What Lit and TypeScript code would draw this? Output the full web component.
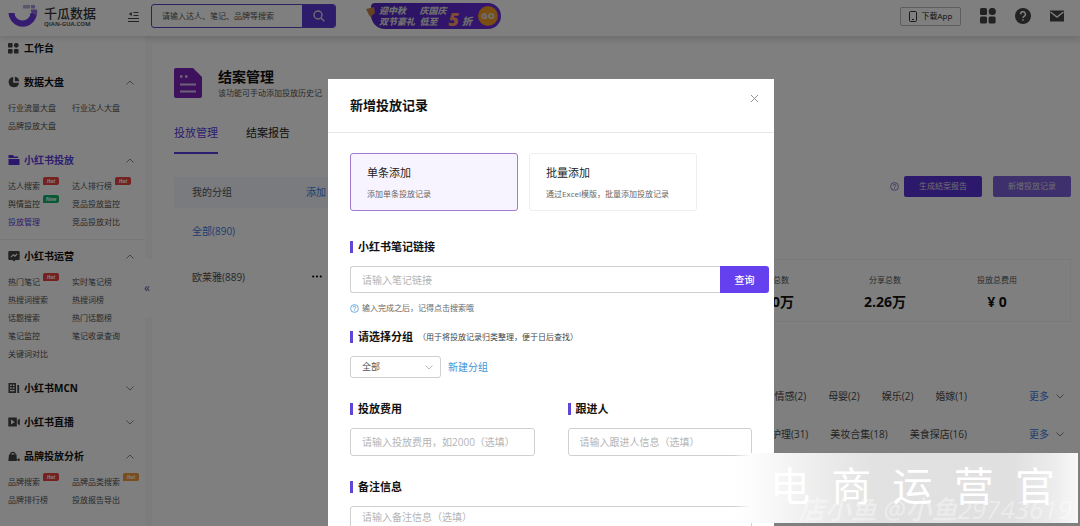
import { LitElement, html, css, svg, nothing } from "lit";
import { customElement, state } from "lit/decorators.js";
import { classMap } from "lit/directives/class-map.js";

interface NavItem {
  label: string;
  badge?: "hot" | "new" | "warm";
  active?: boolean;
}
interface NavSection {
  label: string;
  icon: string;
  open: boolean;
  active?: boolean;
  line?: boolean;
  items: NavItem[];
}

const icons: Record<string, unknown> = {
  grid: svg`<rect x="0" y="0" width="5" height="5" rx="1"/><circle cx="9" cy="2.5" r="2.6"/><rect x="0" y="6.5" width="5" height="5" rx="1"/><rect x="6.5" y="6.5" width="5" height="5" rx="1"/>`,
  pie: svg`<path d="M5.2 1A5.2 5.2 0 1 0 11 6.8H5.2Z"/><path d="M6.8 0.8A5 5 0 0 1 11.2 5.2H6.8Z"/>`,
  folder: svg`<path d="M0.5 1H5l1 1.500h4V4H0.500Z"/><path d="M0.500 5H11.500V11H0.500Z"/>`,
  board: svg`<path fill-rule="evenodd" d="M1.500 1h9a1.200 1.200 0 0 1 1.200 1.200v6.600a1.200 1.200 0 0 1-1.200 1.200H7.500L6 11.500 4.500 10h-3A1.200 1.200 0 0 1 0.300 8.800V2.200A1.200 1.200 0 0 1 1.500 1ZM2.500 6.800l.8.8L5.400 5.500l1.500 1.400L9.600 4.200l-.8-.8L6.900 5.300 5.400 3.900Z"/>`,
  building: svg`<path fill-rule="evenodd" d="M0.500 1H8V11H0.500ZM2 2.500V4H3.700V2.500ZM4.800 2.500V4H6.500V2.500ZM2 5.200V6.700H3.700V5.200ZM4.800 5.200V6.700H6.500V5.200ZM2 8V9.300H6.500V8Z"/><rect x="9.300" y="3" width="1.800" height="8"/>`,
  video: svg`<path fill-rule="evenodd" d="M0.300 1.500H8.800V10.500H0.300ZM3 3.600V8.400L6.800 6Z"/><path d="M9.600 4.300 11.800 2.500V9.500L9.600 7.700Z"/>`,
  bag: svg`<path fill-rule="evenodd" d="M1 4.500h1a2.800 2.800 0 0 1 5.600 0H8.600V7.500L9 11H0.300ZM3.200 4.500h3.200a1.600 1.600 0 0 0-3.200 0Z"/><circle cx="10.600" cy="9.700" r="1.300"/>`,
};

const sections: NavSection[] = [
  { label: "数据大盘", icon: "pie", open: true, items: [{ label: "行业流量大盘" }, { label: "行业达人大盘" }, { label: "品牌投放大盘" }] },
  {
    label: "小红书投放", icon: "folder", open: true, active: true, line: true,
    items: [
      { label: "达人搜索", badge: "hot" }, { label: "达人排行榜", badge: "hot" },
      { label: "舆情监控", badge: "new" }, { label: "竞品投放监控" },
      { label: "投放管理", active: true }, { label: "竞品投放对比" },
    ],
  },
  {
    label: "小红书运营", icon: "board", open: true,
    items: [
      { label: "热门笔记", badge: "hot" }, { label: "实时笔记榜" },
      { label: "热搜词搜索" }, { label: "热搜词榜" },
      { label: "话题搜索" }, { label: "热门话题榜" },
      { label: "笔记监控" }, { label: "笔记收录查询" },
      { label: "关键词对比" },
    ],
  },
  { label: "小红书MCN", icon: "building", open: false, items: [] },
  { label: "小红书直播", icon: "video", open: false, items: [] },
  {
    label: "品牌投放分析", icon: "bag", open: true,
    items: [{ label: "品牌搜索", badge: "hot" }, { label: "品牌品类搜索", badge: "warm" }, { label: "品牌排行榜" }, { label: "投放报告导出" }],
  },
];

const stats = [
  { label: "点赞总数", value: "1.50万" },
  { label: "分享总数", value: "2.26万" },
  { label: "投放总费用", value: "¥ 0" },
];

const tagRows = [
  ["情感(2)", "母婴(2)", "娱乐(2)", "婚嫁(1)"],
  ["护理(31)", "美妆合集(18)", "美食探店(16)"],
];

@customElement("app-root")
export class AppRoot extends LitElement {
  @state() private mode = 0;

  static styles = css`
    :host {
      display: block;
      position: relative;
      height: 100vh;
      overflow: hidden;
      font-family: "Open Sans", "Noto Sans CJK SC", sans-serif;
      font-size: 8px;
      line-height: 12px;
      color: #222;
      background: #fff;
    }
    * { box-sizing: border-box; }
    button, input, select, textarea { font: inherit; color: inherit; margin: 0; padding: 0; border: 0; background: none; outline: none; border-radius: 0; }
    button { cursor: pointer; }
    a { color: inherit; text-decoration: none; }
    h1, h2, h3, p, ul, dl, dd, dt { margin: 0; padding: 0; font-size: inherit; list-style: none; }
    svg { display: block; flex: none; }
    .chev { fill: none; stroke: #888; stroke-width: 1; }

    .page { display: flex; flex-direction: column; height: 100%; }
    .topbar { display: flex; align-items: center; height: 36px; flex: none; padding: 0 16px 4px 8px; background: #fff; box-shadow: 0 2px 6px rgba(0, 0, 0, 0.14); z-index: 1; }
    .brand { display: flex; align-items: center; gap: 6px; width: 120px; }
    .brand-text { display: flex; flex-direction: column; }
    .brand-name { font-size: 13px; line-height: 16px; color: #333; font-weight: 500; }
    .brand-site { font-size: 6px; line-height: 7px; font-weight: 700; color: #555; }
    .search { display: flex; width: 185px; height: 24px; margin-left: 12px; border: 1px solid #5f45c8; border-radius: 3px; overflow: hidden; }
    .search input { flex: 1; min-width: 0; padding: 0 10px; }
    .search input::placeholder { color: #555; opacity: 1; }
    .search button { width: 33px; background: #5a38d8; display: grid; place-items: center; }
    .promo { position: relative; display: flex; align-items: center; width: 135px; height: 26px; margin-left: 30px; }
    .promo-body { display: flex; align-items: center; width: 130px; height: 26px; margin-left: 5px; padding: 0 3px 0 8px; border-radius: 4px 13px 13px 14px; background: linear-gradient(90deg, #5526c4, #6a2ce0); color: #ddd; font-style: italic; font-weight: 900; }
    .promo-lines { display: grid; grid-template-columns: auto auto; font-size: 9px; line-height: 11px; flex: 1; }
    .promo-lines span { white-space: nowrap; }
    .promo-five { color: #ff9a68; font-size: 18px; line-height: 20px; align-self: end; }
    .promo-zhe { font-size: 10px; align-self: end; margin: 0 6px 2px 3px; }
    .promo-go { display: grid; place-items: center; width: 20px; height: 20px; border-radius: 50%; background: #f59a23; font-size: 9px; font-style: normal; }
    .promo-tip { position: absolute; left: 0; top: 4px; }
    .tools { display: flex; align-items: center; gap: 19px; margin-left: auto; }
    .app-btn { display: flex; align-items: center; justify-content: center; gap: 5px; width: 61px; height: 19px; border: 1px solid #bbb; border-radius: 2px; }
    .dark { fill: #444; }

    .frame { display: flex; flex: 1; min-height: 0; background: #f8f8f8; }
    .side { display: flex; flex-direction: column; width: 145px; flex: none; background: #fff; position: relative; }
    .home { display: flex; align-items: center; gap: 5px; height: 24px; margin-bottom: 5px; padding-left: 8px; font-size: 10px; font-weight: 700; color: #111; }
    .sec { padding-bottom: 8px; }
    .sec.closed { padding-bottom: 0; }
    .sec.line { border-bottom: 1px solid #eee; margin-bottom: -1px; }
    .sec-head { display: flex; align-items: center; gap: 4px; width: 100%; height: 34px; padding: 0 11px 0 8px; font-size: 10px; font-weight: 700; color: #111; text-align: left; }
    .sec-head span { flex: 1; }
    .sec-head .glyph { fill: #444; }
    .sec-head.on { color: #5a3de0; }
    .sec-head.on .glyph { fill: #5a2fd8; }
    .links { display: grid; grid-template-columns: 64px 1fr; padding-left: 8px; }
    .links li { display: flex; gap: 3px; height: 18px; line-height: 18px; white-space: nowrap; color: #505050; }
    .links .on { color: #5a3de0; }
    .badge { height: 8px; width: 16px; border-radius: 2px 2px 2px 0; font-size: 5px; line-height: 8px; font-style: italic; font-weight: 700; color: #fff; text-align: center; background: #e8433f; }
    .badge.new { background: #15b06b; }
    .badge.warm { background: #f59a3d; }
    .fold { position: absolute; left: 141px; top: 222px; width: 12px; height: 60px; background: #fff; border-radius: 0 6px 6px 0; color: #5a5a9a; font-size: 12px; }

    .main { flex: 1; min-width: 0; margin: 8px 0 0 7px; padding: 20px 9px 0 22px; background: #fff; }
    .head { display: flex; gap: 16px; align-items: center; height: 38px; }
    .head h1 { font-size: 14px; line-height: 20px; color: #111; }
    .head p { font-size: 8px; line-height: 12px; color: #555; white-space: nowrap; }
    .tabs { display: flex; gap: 28px; margin-top: 11px; font-size: 11px; }
    .tabs a { height: 41px; padding-top: 12px; line-height: 16px; border-bottom: 2px solid transparent; }
    .tabs .on { color: #5a3de0; border-color: #5a3de0; }
    .cols { display: flex; gap: 12px; margin-top: 23px; font-size: 10px; }
    .groups { width: 168px; flex: none; }
    .groups-head { display: flex; justify-content: space-between; height: 31px; line-height: 31px; padding: 0 16px 0 18px; background: #f3f6fc; color: #555; }
    .blue { color: #3d7be0; }
    .groups li { display: flex; justify-content: space-between; align-items: center; height: 47px; padding: 0 20px 0 18px; color: #505050; }
    .groups .all { height: 45px; color: #3d7be0; }
    .detail { flex: 1; min-width: 0; }
    .acts { display: flex; justify-content: flex-end; align-items: center; gap: 11px; height: 18px; }
    .acts button { width: 78px; height: 21px; border-radius: 2px; background: #5a32d6; color: #ddd; font-size: 8px; }
    .acts button.light { background: #7b60d8; }
    .acts svg { margin-right: -6px; }
    .stats { display: flex; justify-content: flex-end; margin-top: 64px; padding: 14px 17px 9px; border: 1px solid #f2f2f2; }
    .stats div { width: 112px; text-align: center; }
    .stats dt { font-size: 8px; line-height: 12px; color: #555; }
    .stats dd { font-size: 14px; line-height: 20px; margin-top: 6px; font-weight: 700; color: #111; }
    .tagbox { display: flex; flex-direction: column; margin-top: 55px; }
    .tags { display: flex; align-items: center; justify-content: flex-end; gap: 22px; height: 38px; padding-right: 7px; color: #484848; white-space: nowrap; }
    .more { display: flex; align-items: center; gap: 7px; margin-left: 40px; }

    .mask { position: absolute; inset: 0; z-index: 2; display: flex; justify-content: center; align-items: flex-start; padding: 79px 0 0 22px; background: rgba(0, 0, 0, 0.5); }
    .modal { width: 446px; background: #fff; color: #333; }
    .modal-head { display: flex; justify-content: space-between; height: 54px; padding: 0 15px 0 22px; border-bottom: 1px solid #e8e8e8; }
    .modal-head h2 { font-size: 13px; line-height: 52px; color: #111; }
    .close { width: 9px; height: 38px; }
    .form { padding: 20px 5px 0 22px; }
    .cards { display: flex; gap: 11px; margin-bottom: 28px; }
    .card { width: 168px; height: 58px; padding: 0 16px; border: 1px solid #eee; border-radius: 3px; text-align: left; white-space: nowrap; }
    .card.on { border-color: #a27bd0; background: #f8f4ff; }
    .card b { display: block; font-weight: 400; font-size: 11px; line-height: 16px; color: #222; margin-bottom: 7px; }
    .card span { display: block; line-height: 12px; color: #666; }
    .title { display: flex; align-items: center; gap: 5px; height: 16px; font-size: 11px; font-weight: 700; color: #111; }
    .title::before { content: ""; width: 3px; height: 12px; background: #5f45d8; }
    .title small { font-size: 8px; font-weight: 400; color: #444; }
    .box { width: 100%; height: 28px; padding: 0 11px; border: 1px solid #d0d0d0; border-radius: 3px; font-size: 10px; }
    .box::placeholder { color: #b4b4b4; opacity: 1; }
    .query { display: flex; margin-top: 11px; }
    .query .box { height: 27px; border-radius: 3px 0 0 3px; border-right: 0; }
    .query button { width: 49px; flex: none; background: #6540ee; color: #fff; font-size: 10px; font-weight: 500; border-radius: 0 3px 3px 0; }
    .hint { display: flex; align-items: center; gap: 3px; height: 12px; margin: 9px 0 15px; color: #666; }
    .pick { display: flex; align-items: center; gap: 7px; margin: 11px 0 23px; font-size: 10px; }
    .sel { display: grid; width: 91px; align-items: center; }
    .sel select { grid-area: 1 / 1; appearance: none; height: 22px; padding: 0 11px; border: 1px solid #d0d0d0; border-radius: 3px; font-size: 9px; color: #555; }
    .sel svg { grid-area: 1 / 1; justify-self: end; margin-right: 8px; pointer-events: none; stroke: #bbb; }
    .pick a { color: #3d94d8; }
    .two { display: grid; grid-template-columns: 1fr 1fr; gap: 33px; padding-right: 17px; }
    .field { display: flex; flex-direction: column; gap: 11px; }
    .note { margin-top: 23px; padding-right: 17px; }
    .note textarea { height: 50px; padding: 2px 11px; resize: none; line-height: 16px; display: block; }

    .mark { position: absolute; right: 2px; bottom: 3px; z-index: 3; width: 345px; height: 70px; overflow: hidden; background: linear-gradient(90deg, rgba(255, 255, 255, 0) 0, #fdfdfd 18px, #f0f0f0 70px, #e2e2e2 140px, #e0e0e0 280px, #ececec 320px, #f8f8f8 345px); }
    .mark-big { display: flex; justify-content: space-between; position: relative; padding: 0 23px 0 37px; font-size: 40px; line-height: 66px; color: #fff; }
    .mark-small { position: absolute; right: 6px; bottom: 0; font-size: 26px; line-height: 28px; font-style: italic; font-weight: 500; color: rgba(255, 255, 255, 0.4); white-space: nowrap; }
  `;

  private chevron(up: boolean) {
    return html`<svg class="chev" width="8" height="5" viewBox="0 0 8 5"><path d=${up ? "M0.500 4.500 4 1 7.500 4.500" : "M0.500 0.500 4 4 7.500 0.500"} /></svg>`;
  }

  private help(color: string) {
    return html`<svg width="9" height="9" viewBox="0 0 9 9" fill="none" stroke=${color} stroke-width="0.800"><circle cx="4.500" cy="4.500" r="3.900" /><path d="M3.200 3.600a1.300 1.300 0 1 1 1.900 1.100c-.5.2-.6.500-.6.900M4.500 6.200v.8" /></svg>`;
  }

  private sidebar() {
    return html`<nav class="side">
      <a class="home" href="#"><svg class="dark" width="11" height="11" viewBox="0 0 12 12">${icons.grid}</svg>工作台</a>
      ${sections.map((s) => html`<section class=${classMap({ sec: true, closed: !s.open, line: !!s.line })}>
        <button class=${classMap({ "sec-head": true, on: !!s.active })} aria-expanded=${s.open}>
          <svg class="glyph" width="12" height="12" viewBox="0 0 12 12">${icons[s.icon]}</svg><span>${s.label}</span>${this.chevron(s.open)}
        </button>
        ${s.open ? html`<ul class="links">${s.items.map((i) => html`<li>
          <a href="#" class=${i.active ? "on" : ""}>${i.label}</a>${i.badge ? html`<span class="badge ${i.badge}">${i.badge === "new" ? "New" : "Hot"}</span>` : nothing}
        </li>`)}</ul>` : nothing}
      </section>`)}
      <button class="fold" aria-label="收起">«</button>
    </nav>`;
  }

  private topbar() {
    return html`<header class="topbar">
      <div class="brand">
        <svg width="30" height="24" viewBox="0 0 30 24"><path d="M0.500 9H6.500a8 7.500 0 0 0 16 0H29A14.300 15 0 0 1 0.500 9Z" fill="#6a38e0" /><path d="M23 5.500h6.200a15 15 0 0 1-.8 6.500L23 8Z" fill="#8f72dc" /><rect x="15" y="1" width="7" height="3.500" fill="#b9acd8" /><rect x="23" y="1" width="4" height="3.500" fill="#a48fd8" /></svg>
        <div class="brand-text"><span class="brand-name">千瓜数据</span><span class="brand-site">QIAN-GUA.COM</span></div>
      </div>
      <svg width="11" height="11" viewBox="0 0 11 11" stroke="#444" fill="none"><path d="M5.500 1.500H10.500M5.500 4.500H10.500M0 7.500H11M0 10.500H11" /><path d="M3.800 1V5L0.800 3Z" fill="#444" stroke="none" /></svg>
      <form class="search">
        <input type="search" aria-label="搜索" placeholder="请输入达人、笔记、品牌等搜索" />
        <button type="button" aria-label="搜索"><svg width="12" height="12" viewBox="0 0 12 12" fill="none" stroke="#ddd" stroke-width="1.400"><circle cx="5" cy="5" r="4" /><path d="M8 8l3.300 3.300" /></svg></button>
      </form>
      <a class="promo" href="#">
        <div class="promo-body">
          <div class="promo-lines"><span>迎中秋&nbsp;</span><span>庆国庆</span><span>双节豪礼&nbsp;</span><span>低至</span></div>
          <span class="promo-five">5</span><span class="promo-zhe">折</span><span class="promo-go">GO</span>
        </div>
        <svg class="promo-tip" width="9" height="10" viewBox="0 0 9 10"><path d="M0 2 8 0 9 6 4 10Z" fill="#c98648" /></svg>
      </a>
      <div class="tools">
        <button class="app-btn"><svg width="8" height="11" viewBox="0 0 8 11" fill="none" stroke="#333"><rect x="0.500" y="0.500" width="7" height="10" rx="1" /><path d="M3 8.500H5" /></svg>下载App</button>
        <svg class="dark" width="16" height="16" viewBox="0 0 16 16"><rect width="7" height="7" rx="1.500" /><circle cx="12.300" cy="3.500" r="3.600" /><rect y="8.500" width="7" height="7" rx="1.500" /><rect x="8.600" y="8.500" width="7" height="7" rx="1.500" /></svg>
        <svg class="dark" width="16" height="16" viewBox="0 0 16 16"><circle cx="8" cy="8" r="8" /><path d="M5.600 6.200a2.400 2.400 0 1 1 3.500 2.100c-.8.500-1.100.8-1.100 1.700M8 11.200v1.500" fill="none" stroke="#fff" stroke-width="1.500" /></svg>
        <svg class="dark" width="14" height="12" viewBox="0 0 14 12"><path d="M0 0.500H14V11.500H0Z" /><path d="M0.500 2 7 7 13.500 2" fill="none" stroke="#fff" stroke-width="1.400" /></svg>
      </div>
    </header>`;
  }

  private content() {
    return html`<main class="main">
      <div class="head">
        <svg width="28" height="30" viewBox="0 0 28 30"><path d="M2 0H19L28 9V28a2 2 0 0 1-2 2H2a2 2 0 0 1-2-2V2A2 2 0 0 1 2 0Z" fill="#7a22b8" /><path d="M6 16.500H22M6 23.500H22" stroke="#dcc6ee" stroke-width="2.200" /><path d="M6 8.500H8.500M11 8.500H13.500" stroke="#dcc6ee" stroke-width="2.500" /></svg>
        <div><h1>结案管理</h1><p>该功能可手动添加投放历史记</p></div>
      </div>
      <nav class="tabs"><a href="#" class="on">投放管理</a><a href="#">结案报告</a></nav>
      <div class="cols">
        <aside class="groups">
          <div class="groups-head"><span>我的分组</span><a class="blue" href="#">添加</a></div>
          <ul><li class="all">全部(890)</li><li><span>欧莱雅(889)</span><svg width="10" height="3" viewBox="0 0 10 3"><circle cx="1.200" cy="1.500" r="1.100" /><circle cx="5" cy="1.500" r="1.100" /><circle cx="8.800" cy="1.500" r="1.100" /></svg></li></ul>
        </aside>
        <section class="detail">
          <div class="acts">${this.help("#6a5fc0")}<button>生成结案报告</button><button class="light">新增投放记录</button></div>
          <dl class="stats">${stats.map((s) => html`<div><dt>${s.label}</dt><dd>${s.value}</dd></div>`)}</dl>
          <div class="tagbox">${tagRows.map((row) => html`<div class="tags">${row.map((t) => html`<span>${t}</span>`)}<a class="more blue" href="#">更多 ${this.chevron(false)}</a></div>`)}</div>
        </section>
      </div>
    </main>`;
  }

  private modal() {
    const cards = [["单条添加", "添加单条投放记录"], ["批量添加", "通过Excel模版，批量添加投放记录"]];
    return html`<div class="mask">
      <div class="modal" role="dialog" aria-labelledby="dlg">
        <div class="modal-head"><h2 id="dlg">新增投放记录</h2>
          <button class="close" aria-label="关闭"><svg width="9" height="9" viewBox="0 0 9 9" stroke="#888" stroke-width="0.900"><path d="M1 1 8 8M8 1 1 8" /></svg></button></div>
        <div class="form">
          <div class="cards">${cards.map(([t, d], i) => html`<button class=${classMap({ card: true, on: this.mode === i })} @click=${() => (this.mode = i)}><b>${t}</b><span>${d}</span></button>`)}</div>
          <label class="title" for="link">小红书笔记链接</label>
          <div class="query"><input class="box" id="link" placeholder="请输入笔记链接" /><button>查询</button></div>
          <p class="hint">${this.help("#4a9ad8")}输入完成之后，记得点击搜索哦</p>
          <label class="title" for="group">请选择分组<small>（用于将投放记录归类整理，便于日后查找）</small></label>
          <div class="pick"><div class="sel"><select id="group"><option>全部</option></select>${this.chevron(false)}</div><a href="#">新建分组</a></div>
          <div class="two">
            <div class="field"><label class="title" for="cost">投放费用</label><input class="box" id="cost" placeholder="请输入投放费用，如2000（选填）" /></div>
            <div class="field"><label class="title" for="owner">跟进人</label><input class="box" id="owner" placeholder="请输入跟进人信息（选填）" /></div>
          </div>
          <div class="field note"><label class="title" for="memo">备注信息</label><textarea class="box" id="memo" placeholder="请输入备注信息（选填）"></textarea></div>
        </div>
      </div>
    </div>`;
  }

  render() {
    return html`<div class="page">${this.topbar()}<div class="frame">${this.sidebar()}${this.content()}</div></div>
      ${this.modal()}
      <div class="mark"><div class="mark-small">店小鱼 @小鱼29743619</div><div class="mark-big"><span>电</span><span>商</span><span>运</span><span>营</span><span>官</span></div></div>`;
  }
}
